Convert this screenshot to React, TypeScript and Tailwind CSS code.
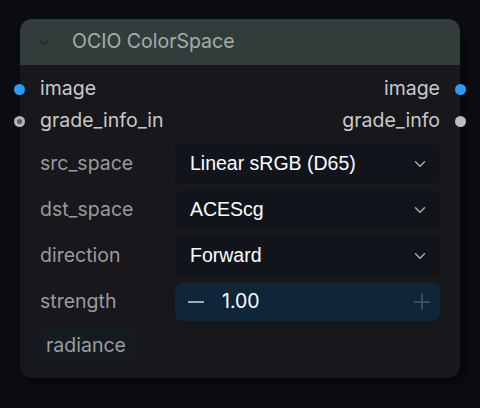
import { ChevronDown } from 'lucide-react';

const inter = { fontFamily: 'Inter, "Noto Sans", sans-serif' };

const SelectRow = ({ label, value }: { label: string; value: string }) => {
  return (
    <div className="flex h-[46px] items-center">
      <div className="w-[135px] text-[19.5px] text-[#9a9a9c]">{label}</div>
      <div className="flex h-10 w-[265px] items-center justify-between rounded-md bg-[#11141b] pl-[15px] pr-[11px]">
        <span className="text-[19.5px] text-white" style={{ fontFamily: '"Liberation Sans", Arial, sans-serif' }}>
          {value}
        </span>
        <ChevronDown size={18} strokeWidth={2} className="text-[#a8a8a8]" />
      </div>
    </div>
  );
};

export default function App() {
  return (
    <div className="h-[408px] w-[480px] overflow-hidden bg-[#0b0d13] pl-5 pt-[19px]" style={inter}>
      <div className="relative h-[359px] w-[440px] rounded-xl bg-[#18171b] shadow-[6px_8px_10px_rgba(0,0,0,0.45)]">
        {/* header */}
        <div className="flex h-[46px] items-center rounded-t-xl bg-[#323d3b] pl-[14px]">
          <ChevronDown size={20} strokeWidth={2} className="text-[#222c2a]" />
          <span className="ml-[18px] text-[19.5px] text-[#a3adaa]">OCIO ColorSpace</span>
        </div>

        <div className="pt-[8px]">
          {/* slots */}
          <div className="relative flex h-8 items-center justify-between px-5">
            <span className="absolute left-[-6px] h-[11px] w-[11px] rounded-full bg-[#2e9bf2]" />
            <span className="text-[19.5px] text-[#c9c9cb]">image</span>
            <span className="text-[19.5px] text-[#c9c9cb]">image</span>
            <span className="absolute right-[-6px] h-[11px] w-[11px] rounded-full bg-[#2e9bf2]" />
          </div>
          <div className="relative flex h-8 items-center justify-between px-5">
            <span className="absolute left-[-6px] flex h-[11px] w-[11px] items-center justify-center rounded-full bg-[#b4b4b4]">
              <span className="h-[5px] w-[5px] rounded-full bg-[#5a5a5c]" />
            </span>
            <span className="text-[19.5px] text-[#c9c9cb]">grade_info_in</span>
            <span className="text-[19.5px] text-[#c9c9cb]">grade_info</span>
            <span className="absolute right-[-6px] h-[11px] w-[11px] rounded-full bg-[#bdbdbd]" />
          </div>

          {/* widgets */}
          <div className="mt-[4px] pl-5">
            <SelectRow label="src_space" value="Linear sRGB (D65)" />
            <SelectRow label="dst_space" value="ACEScg" />
            <SelectRow label="direction" value="Forward" />
            <div className="flex h-[46px] items-center">
              <div className="w-[135px] text-[19.5px] text-[#9a9a9c]">strength</div>
              <div className="flex h-[38px] w-[265px] items-center rounded-lg bg-[#0f2538] pl-[13px] pr-[10px]">
                <svg width="16" height="16" viewBox="0 0 16 16" className="text-[#b8c0c6]">
                  <path d="M0 8h16" stroke="currentColor" strokeWidth="1.75" />
                </svg>
                <span className="ml-[18px] text-[19.5px] text-white">1.00</span>
                <svg width="16" height="16" viewBox="0 0 16 16" className="ml-auto text-[#3d5364]">
                  <path d="M0 8h16M8 0v16" stroke="currentColor" strokeWidth="1.75" />
                </svg>
              </div>
            </div>
            <div className="-ml-1 mt-1 flex h-[34px] w-[100px] items-center rounded-md bg-[#161a21] pl-[10px]">
              <span className="text-[19.5px] text-[#9c9c9e]">radiance</span>
            </div>
          </div>
        </div>
      </div>
    </div>
  );
}
